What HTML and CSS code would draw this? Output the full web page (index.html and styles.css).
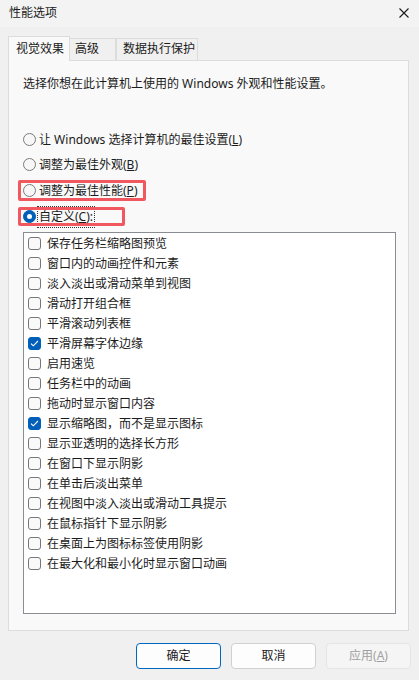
FILE: index.html
```html
<!DOCTYPE html>
<html lang="zh-CN">
<head>
<meta charset="utf-8">
<title>性能选项</title>
<link rel="stylesheet" href="styles.css">
</head>
<body>
<div class="window">
  <div class="titlebar">
    <span class="title">性能选项</span>
    <svg class="close" width="10" height="10" viewBox="0 0 10 10"><path d="M0.5 0.5 L9.5 9.5 M9.5 0.5 L0.5 9.5" stroke="#1a1a1a" stroke-width="1.1" fill="none"/></svg>
  </div>
  <div class="tabs">
    <div class="tab active">视觉效果</div>
    <div class="tab t2">高级</div>
    <div class="tab t3">数据执行保护</div>
  </div>
  <div class="panel">
    <p class="desc">选择你想在此计算机上使用的 Windows 外观和性能设置。</p>
    <div class="radios">
      <div class="radio"><span class="circle"></span><span class="label">让 Windows 选择计算机的最佳设置(<u>L</u>)</span></div>
      <div class="radio"><span class="circle"></span><span class="label">调整为最佳外观(<u>B</u>)</span></div>
      <div class="radio r3"><span class="circle"></span><span class="label">调整为最佳性能(<u>P</u>)</span><span class="mark m1"></span></div>
      <div class="radio r4"><span class="circle on"></span><span class="label focus">自定义(<u>C</u>):</span><span class="mark m2"></span></div>
    </div>
    <div class="listbox">
      <div class="item"><span class="box"></span>保存任务栏缩略图预览</div>
      <div class="item"><span class="box"></span>窗口内的动画控件和元素</div>
      <div class="item"><span class="box"></span>淡入淡出或滑动菜单到视图</div>
      <div class="item"><span class="box"></span>滑动打开组合框</div>
      <div class="item"><span class="box"></span>平滑滚动列表框</div>
      <div class="item"><span class="box on"><svg width="9" height="7" viewBox="0 0 9 7"><path d="M1 3.6 L3.3 5.8 L8 1" stroke="#fff" stroke-width="1.1" fill="none"/></svg></span>平滑屏幕字体边缘</div>
      <div class="item"><span class="box"></span>启用速览</div>
      <div class="item"><span class="box"></span>任务栏中的动画</div>
      <div class="item"><span class="box"></span>拖动时显示窗口内容</div>
      <div class="item"><span class="box on"><svg width="9" height="7" viewBox="0 0 9 7"><path d="M1 3.6 L3.3 5.8 L8 1" stroke="#fff" stroke-width="1.1" fill="none"/></svg></span>显示缩略图，而不是显示图标</div>
      <div class="item"><span class="box"></span>显示亚透明的选择长方形</div>
      <div class="item"><span class="box"></span>在窗口下显示阴影</div>
      <div class="item"><span class="box"></span>在单击后淡出菜单</div>
      <div class="item"><span class="box"></span>在视图中淡入淡出或滑动工具提示</div>
      <div class="item"><span class="box"></span>在鼠标指针下显示阴影</div>
      <div class="item"><span class="box"></span>在桌面上为图标标签使用阴影</div>
      <div class="item"><span class="box"></span>在最大化和最小化时显示窗口动画</div>
    </div>
  </div>
  <div class="buttons">
    <div class="btn primary">确定</div>
    <div class="btn">取消</div>
    <div class="btn disabled">应用(<u>A</u>)</div>
  </div>
</div>
</body>
</html>
```

FILE: styles.css
```css
* { box-sizing: border-box; }
html, body { margin: 0; padding: 0; }
body {
  width: 419px;
  height: 680px;
  background: #f0f0f0;
  font-family: "Noto Sans", "Noto Sans CJK SC", sans-serif;
  font-size: 12px;
  color: #1b1b1b;
  overflow: hidden;
}
.window {
  width: 419px;
  height: 680px;
  background: #f0f0f0;
  display: flex;
  flex-direction: column;
}
.titlebar {
  height: 27px;
  background: #f3f3f3;
  display: flex;
  align-items: center;
  justify-content: space-between;
  padding: 0 10px 2px 9px;
}
.title { line-height: 16px; }
.close { display: block; margin-top: 1px; }
.tabs {
  height: 33px;
  display: flex;
  align-items: flex-end;
  padding-left: 8px;
}
.tab {
  height: 22px;
  border: 1px solid #dcdcdc;
  border-bottom: none;
  background: #f0f0f0;
  line-height: 20px;
  white-space: nowrap;
}
.tab.active {
  width: 62px;
  height: 25px;
  margin-bottom: -1px;
  position: relative;
  z-index: 1;
  background: #f9f9f9;
  padding: 2px 0 0 7px;
}
.tab.t2 { width: 46px; border-left: none; padding-left: 5px; }
.tab.t3 { width: 82px; border-left: 1px solid #dcdcdc; padding-left: 6px; }
.panel {
  margin-left: 8px;
  width: 401px;
  height: 571px;
  border: 1px solid #dcdcdc;
  background: #f9f9f9;
  padding: 13px 12px 16px 14px;
}
.desc { margin: 0; line-height: 20px; }
.radios { margin-top: 33px; }
.radio {
  height: 25px;
  display: flex;
  align-items: center;
  position: relative;
}
.radio.r3, .radio.r4 { margin-top: 1px; }
.circle {
  width: 13px;
  height: 13px;
  border-radius: 50%;
  border: 1px solid #7a7a7a;
  background: #f7f7f7;
  margin-right: 3px;
  flex: none;
  display: flex;
  align-items: center;
  justify-content: center;
}
.circle.on {
  border-color: #005fb8;
  background: #005fb8;
}
.circle.on::after {
  content: "";
  width: 5px;
  height: 5px;
  border-radius: 50%;
  background: #fff;
}
.label { line-height: 18px; white-space: nowrap; }
.label.focus { outline: 1px dotted #333; outline-offset: 1px; }
.mark {
  position: absolute;
  border: 3px solid #f0575e;
  border-radius: 2px;
  pointer-events: none;
}
.m1 { left: -5px; top: 2px; width: 128px; height: 21px; }
.m2 { left: -5px; top: 3px; width: 107px; height: 19px; }
.listbox {
  margin-top: 3px;
  width: 373px;
  height: 382px;
  border: 1px solid #8a8d92;
  background: #ffffff;
  padding: 0 0 0 4px;
}
.item {
  height: 20px;
  display: flex;
  align-items: center;
  white-space: nowrap;
}
.box {
  width: 13px;
  height: 13px;
  border: 1px solid #767676;
  border-radius: 3px;
  background: #f9f9f9;
  margin-right: 6px;
  flex: none;
  display: flex;
  align-items: center;
  justify-content: center;
}
.box.on { background: #005fb8; border-color: #005fb8; }
.box svg { display: block; }
.buttons {
  margin-top: 12px;
  display: flex;
  justify-content: flex-end;
  gap: 10px;
  padding-right: 8px;
}
.btn {
  width: 85px;
  height: 26px;
  border: 1px solid #d0d0d0;
  border-radius: 4px;
  background: #fdfdfd;
  display: flex;
  align-items: center;
  justify-content: center;
  line-height: 16px;
}
.btn.primary { border-color: #0067c0; }
.btn.disabled { background: #f5f5f5; border-color: #e5e5e5; color: #a0a0a0; }
```
